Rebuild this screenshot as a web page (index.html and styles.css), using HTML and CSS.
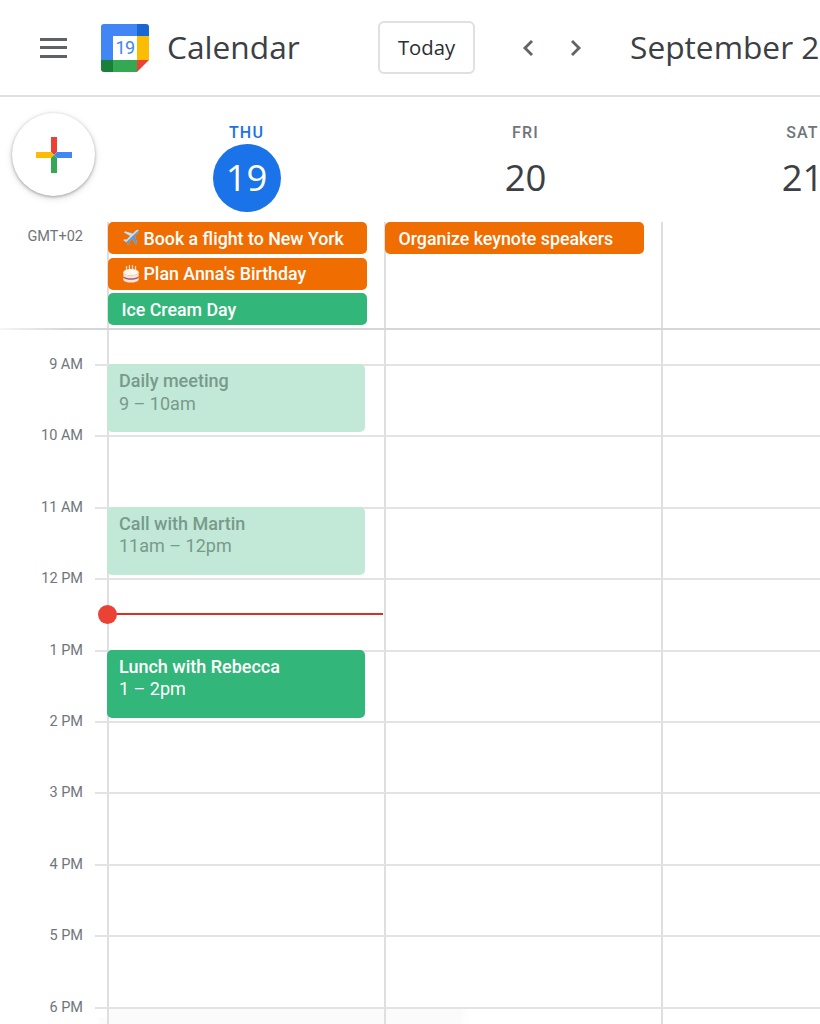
FILE: index.html
```html
<!DOCTYPE html>
<html lang="en">
<head>
<meta charset="utf-8">
<title>Calendar</title>
<link rel="stylesheet" href="styles.css">
</head>
<body>
<header class="topbar">
  <button class="menu" aria-label="Main menu"><span></span><span></span><span></span></button>
  <div class="logo">
    <svg class="logo-art" viewBox="0 0 48 48" width="48" height="48" aria-hidden="true">
      <path d="M3 0H36V12H12V36H0V3A3 3 0 0 1 3 0Z" fill="#4285f4"/>
      <path d="M36 0H45A3 3 0 0 1 48 3V12H36Z" fill="#1967d2"/>
      <rect x="36" y="12" width="12" height="24" fill="#fbbc04"/>
      <rect x="12" y="36" width="24" height="12" fill="#34a853"/>
      <path d="M0 36H12V48H3A3 3 0 0 1 0 45Z" fill="#188038"/>
      <path d="M36 36H48L36 48Z" fill="#ea4335"/>
    </svg>
    <span class="logo-day">19</span>
  </div>
  <span class="product">Calendar</span>
  <button class="today">Today</button>
  <svg class="chev chev-prev" viewBox="0 0 14 20" width="14" height="20" aria-hidden="true"><path d="M11 3 4 10l7 7" fill="none" stroke="#5f6368" stroke-width="2.8"/></svg>
  <svg class="chev chev-next" viewBox="0 0 14 20" width="14" height="20" aria-hidden="true"><path d="M3 3l7 7-7 7" fill="none" stroke="#5f6368" stroke-width="2.8"/></svg>
  <span class="month">September 2</span>
</header>

<section class="days">
  <div class="fab-cell">
    <button class="fab" aria-label="Create">
      <svg viewBox="0 0 36 36" width="36" height="36" aria-hidden="true">
        <path d="M15 0h6v15l-3 3-3-3Z" fill="#ea4335"/>
        <path d="M0 15h15l3 3-3 3H0Z" fill="#fbbc04"/>
        <path d="M18 18l3-3h15v6H21Z" fill="#4285f4"/>
        <path d="M15 21l3-3 3 3v15h-6Z" fill="#34a853"/>
      </svg>
    </button>
  </div>
  <div class="day day-now"><span class="dow">THU</span><span class="num">19</span></div>
  <div class="day"><span class="dow">FRI</span><span class="num">20</span></div>
  <div class="day"><span class="dow">SAT</span><span class="num">21</span></div>
</section>

<section class="allday">
  <div class="tz">GMT+02</div>
  <div class="cell stack">
    <div class="chip orange">
      <svg class="emoji" viewBox="0 0 20 20" width="18" height="18" aria-hidden="true">
        <path d="M18.6 1.4c-.9-.9-2.300-.6-3.200.3L12 5.100 3.400 2.600 2 4l7 3.900-3.800 3.800-2.600-.4L1.400 12.500l3.500 2.100 2.100 3.500 1.200-1.200-.4-2.600 3.800-3.800 3.900 7 1.400-1.400-2.500-8.600 3.400-3.400c.9-.9 1.700-1.800.8-2.700Z" fill="#c3dff2"/>
        <path d="M18.600 1.400 5.200 14.300l-.3.300 2.100 3.500 1.200-1.200-.4-2.600 3.800-3.800 3.900 7 1.400-1.400-2.500-8.600 3.400-3.400c.9-.9 1.700-1.800.8-2.700Z" fill="#5b9bd0"/>
      </svg><span>Book a flight to New York</span>
    </div>
    <div class="chip orange">
      <svg class="emoji" viewBox="0 0 20 20" width="18" height="18" aria-hidden="true">
        <path d="M5 1v6M8.300 0v7M11.700 0v7M15 1v6" stroke="#f4d9c2" stroke-width="1.400"/>
        <ellipse cx="10" cy="8" rx="8.500" ry="3.500" fill="#fff6ee"/>
        <path d="M1.500 8v8c0 1.900 3.800 3.500 8.500 3.500s8.500-1.600 8.500-3.500V8c0 1.900-3.800 3.500-8.500 3.500S1.500 9.900 1.500 8Z" fill="#f5e4da"/>
        <path d="M1.500 12.500c2 1.800 5 2.200 8.500 2.200s6.500-.4 8.500-2.200v1.800c-2 1.800-5 2.200-8.500 2.200s-6.500-.4-8.500-2.200Z" fill="#b0566f"/>
      </svg><span>Plan Anna's Birthday</span>
    </div>
    <div class="chip green"><span>Ice Cream Day</span></div>
  </div>
  <div class="cell stack">
    <div class="chip orange"><span>Organize keynote speakers</span></div>
  </div>
  <div class="cell"></div>
</section>

<section class="grid">
  <div class="row row-lead"><div class="gutter-empty"></div><div class="cell"></div><div class="cell"></div><div class="cell"></div></div>

  <div class="row hour"><div class="label">9 AM</div>
    <div class="cell"><div class="event pale"><strong>Daily meeting</strong><span>9 – 10am</span></div></div>
    <div class="cell"></div><div class="cell"></div></div>
  <div class="row hour"><div class="label">10 AM</div><div class="cell"></div><div class="cell"></div><div class="cell"></div></div>
  <div class="row hour"><div class="label">11 AM</div>
    <div class="cell"><div class="event pale"><strong>Call with Martin</strong><span>11am – 12pm</span></div></div>
    <div class="cell"></div><div class="cell"></div></div>
  <div class="row hour"><div class="label">12 PM</div>
    <div class="cell now-cell"><div class="now"></div></div>
    <div class="cell"></div><div class="cell"></div></div>
  <div class="row hour"><div class="label">1 PM</div>
    <div class="cell"><div class="event solid"><strong>Lunch with Rebecca</strong><span>1 – 2pm</span></div></div>
    <div class="cell"></div><div class="cell"></div></div>
  <div class="row hour"><div class="label">2 PM</div><div class="cell"></div><div class="cell"></div><div class="cell"></div></div>
  <div class="row hour"><div class="label">3 PM</div><div class="cell"></div><div class="cell"></div><div class="cell"></div></div>
  <div class="row hour"><div class="label">4 PM</div><div class="cell"></div><div class="cell"></div><div class="cell"></div></div>
  <div class="row hour"><div class="label">5 PM</div><div class="cell"></div><div class="cell"></div><div class="cell"></div></div>
  <div class="row hour hour-last"><div class="label">6 PM</div><div class="cell"></div><div class="cell"></div><div class="cell"></div></div>
</section>
</body>
</html>
```
FILE: styles.css
```css
* { box-sizing: border-box; }
html, body { margin: 0; height: 1024px; overflow: hidden; background: #fff; }
body {
  display: flex;
  flex-direction: column;
  font-family: Roboto, "Liberation Sans", sans-serif;
  color: #3c4043;
}
button { font: inherit; background: none; border: 0; padding: 0; }

.topbar {
  height: 97px;
  flex: none;
  display: flex;
  align-items: center;
  border-bottom: 2px solid #dfdfe1;
  overflow: hidden;
}
.menu {
  width: 27px;
  flex: none;
  margin-left: 40px;
  display: flex;
  flex-direction: column;
  gap: 5.500px;
}
.menu span { display: block; height: 3px; background: #5f6368; }
.logo { position: relative; width: 48px; height: 48px; margin-left: 34px; flex: none; }
.logo-art { display: block; }
.logo-day {
  position: absolute;
  left: 12px; top: 12px; width: 24px; height: 24px;
  display: flex; align-items: center; justify-content: center;
  background: #fff;
  color: #4285f4;
  font-size: 18px;
  letter-spacing: -.5px;
}
.product {
  margin: 0 0 2px 18px;
  width: 211px;
  flex: none;
  font-family: "Open Sans", Roboto, sans-serif;
  font-size: 31.700px;
  line-height: 40px;
  color: #3c4043;
}
.today {
  width: 97px; height: 53px;
  flex: none;
  border: 2px solid #dfe0e2;
  border-radius: 6px;
  padding-bottom: 2px;
  font-family: "Open Sans", Roboto, sans-serif;
  font-size: 20.300px;
  font-weight: 500;
  color: #2b2e31;
}
.chev { flex: none; }
.chev-prev { margin-left: 46px; }
.chev-next { margin-left: 34px; }
.month {
  margin: 0 0 2px 47px;
  white-space: nowrap;
  flex: none;
  font-family: "Open Sans", Roboto, sans-serif;
  font-size: 31.700px;
  line-height: 40px;
  color: #3c4043;
}

.days, .allday, .row {
  display: grid;
  grid-template-columns: 107px 277px 277px 277px;
}
.days { height: 125px; flex: none; overflow: hidden; }
.fab-cell { padding: 16px 0 0 12px; }
.fab {
  width: 83px; height: 83px;
  border-radius: 50%;
  background: #fff;
  box-shadow: 0 1px 3px rgba(60,64,67,.4), 0 2px 7px rgba(60,64,67,.2);
  display: flex; align-items: center; justify-content: center;
}
.day {
  display: flex; flex-direction: column; align-items: center;
  padding: 26px 0 0 6px;
  color: #70757a;
}
.day-now { padding-left: 2px; }
.dow { font-size: 16px; font-weight: 500; letter-spacing: 1.200px; line-height: 20px; height: 21px; }
.num {
  width: 68px; height: 68px;
  display: flex; align-items: center; justify-content: center;
  padding-bottom: 3px;
  font-family: "Open Sans", Roboto, sans-serif;
  font-size: 36.500px;
  color: #3c4043;
}
.day-now .dow { color: #1a73e8; }
.day-now .num { background: #1a73e8; color: #fff; border-radius: 50%; }

.allday {
  height: 108px;
  flex: none;
  overflow: hidden;
  border-bottom: 2px solid #d5d6da;
  border-image: linear-gradient(to right, #f6f6f7, #d5d6da 70px) 1;
}
.tz { font-size: 14.500px; color: #70757a; text-align: right; padding: 6px 24px 0 0; line-height: 17px; }
.cell { border-left: 2px solid #dedee3; min-width: 0; }
.stack { display: flex; flex-direction: column; gap: 3.300px; }
.chip {
  width: 259px;
  height: 32.300px;
  flex: none;
  margin-left: -1px;
  border-radius: 5px;
  padding-left: 13.500px;
  display: flex; align-items: center; gap: 4px;
  color: #fff;
  font-size: 17.800px;
  font-weight: 500;
}
.orange { background: #f06d02; }
.green { background: #33b679; }
.emoji { flex: none; }

.grid { flex: 1; min-height: 0; overflow: hidden; }
.row-lead { height: 34px; }
.hour { height: 71.400px; }
.hour-last {
  background: linear-gradient(to right, transparent 97px, #fbfbfb 100px, #fbfbfb 460px, transparent 470px);
}
.hour .cell { border-top: 2px solid #e3e3e7; }
.label {
  position: relative;
  font-size: 14.500px;
  line-height: 18px;
  height: 18px;
  margin-top: -8px;
  padding-right: 24px;
  text-align: right;
  color: #70757a;
  background: #fff;
}
.label::after {
  content: "";
  position: absolute;
  left: 95px; right: 0; top: 8px;
  height: 2px;
  background: #e3e3e7;
}
.event {
  width: 258px;
  height: 68px;
  margin: -2px 0 0 -2px;
  border-radius: 5px;
  padding: 6px 12px;
  display: flex; flex-direction: column;
  font-size: 18px;
  line-height: 22.500px;
}
.event strong { font-weight: 500; }
.pale { background: #c2e9d7; color: #789a8c; }
.solid { background: #33b679; color: #fff; }

.now-cell { position: relative; }
.now {
  position: absolute;
  left: -2px; top: 33px;
  width: 276px; height: 2px;
  background: #d93025;
}
.now::before {
  content: "";
  position: absolute;
  left: -9px; top: -8.500px;
  width: 19px; height: 19px;
  border-radius: 50%;
  background: #ea4335;
}
```
